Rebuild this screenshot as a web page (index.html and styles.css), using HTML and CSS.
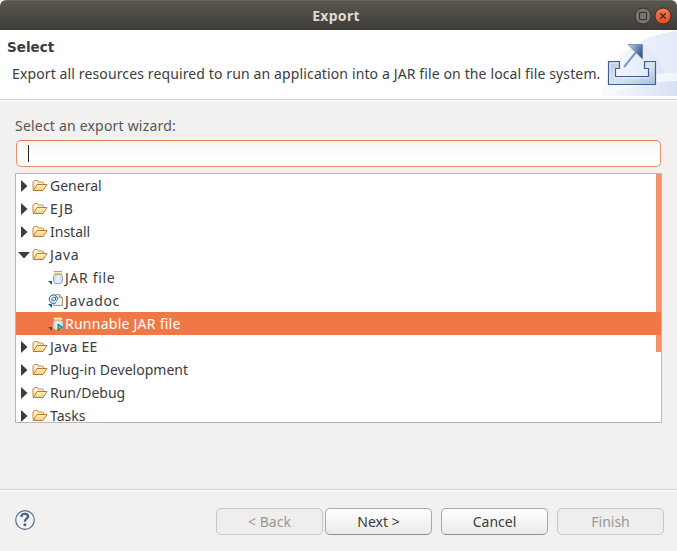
FILE: index.html
```html
<!DOCTYPE html>
<html lang="en">
<head>
<meta charset="utf-8">
<title>Export</title>
<link rel="stylesheet" href="styles.css">
</head>
<body>
<svg class="defs" width="0" height="0" aria-hidden="true">
  <defs>
    <linearGradient id="fold" x1="0" y1="0" x2="0" y2="1"><stop offset="0" stop-color="#fff4cf"/><stop offset="1" stop-color="#f5cf7c"/></linearGradient>
    <linearGradient id="glass" x1="0" y1="0" x2="1" y2="0"><stop offset="0" stop-color="#c3d3ec"/><stop offset=".5" stop-color="#edf4fc"/><stop offset="1" stop-color="#c5d4ee"/></linearGradient>
    <symbol id="folder" viewBox="0 0 16 13">
      <path d="M1 10.500v-7.500l1.500-1.500h3l1 1.500h4l1 1v1.500" fill="#fff0ca" stroke="#c28a43"/>
      <path d="M1.200 11.500 5 5.500h10L11 11.500z" fill="url(#fold)" stroke="#b87a32"/>
    </symbol>
    <symbol id="jar" viewBox="0 0 16 16">
      <path d="M0 11h4v4z" fill="#1e5c94"/>
      <path d="M6.500 4.500h7l1 2v5l-1.500 2H7l-1.500-2v-5z" fill="url(#glass)" stroke="#93a8cf"/>
      <path d="M6 1h8v3H6z" fill="#fff0b0"/>
      <path d="M6 1.500h8M6.500 4h7" stroke="#cfa63c"/>
    </symbol>
    <symbol id="run" viewBox="0 0 16 16">
      <path d="M0 11h4v4z" fill="#1e5c94"/>
      <path d="M6.500 4.500h7l1 2v5l-1.500 2H7l-1.500-2v-5z" fill="url(#glass)" stroke="#bccae2"/>
      <path d="M6 1h8v3H6z" fill="#fff0b0"/>
      <path d="M6 1.500h8M6.500 4h7" stroke="#d9ae42"/>
      <path d="M10 8v6.500l4.500-3.200z" fill="#5ec27e" stroke="#16723e"/>
    </symbol>
    <symbol id="doc" viewBox="0 0 16 16">
      <path d="M0 11h4v4z" fill="#1e5c94"/>
      <path d="M5.500 1.500h6l3 3v8h-9z" fill="#eef4fd" stroke="#9b9a78"/>
      <path d="M11.500 1.500v3h3" fill="#e7d29b" stroke="#b89b58"/>
      <circle cx="6" cy="6" r="4.800" fill="#e6f2fb"/>
      <path d="M8.300 9.500A4.300 4.300 0 1 1 9.800 5.700c0 2-2.500 2.500-2.300.5l.3-2.500M7.500 5.700c-.6-2.300-3.500-1.500-3.600.8-.1 2.300 3 2 3.500-.2" fill="none" stroke="#29649c"/>
    </symbol>
  </defs>
</svg>
<div class="window">
  <header class="titlebar">
    <span></span>
    <h1>Export</h1>
    <div class="controls">
      <svg width="18" height="18" viewBox="0 0 18 18"><circle cx="9" cy="9" r="8" fill="#77746c" stroke="#35332e"/><path d="M5.500 5.500h7v7h-7z" fill="none" stroke="#35332e"/></svg>
      <svg width="18" height="18" viewBox="0 0 18 18"><defs><linearGradient id="close" x1="0" y1="0" x2="0" y2="1"><stop offset="0" stop-color="#f47b55"/><stop offset="1" stop-color="#e64b1d"/></linearGradient></defs><circle cx="9" cy="9" r="8" fill="url(#close)" stroke="#35332e"/><path d="m6.300 6.300 5.400 5.400m0-5.400-5.400 5.400" stroke="#3c2e25" stroke-width="1.300"/></svg>
    </div>
  </header>
  <section class="banner">
    <div class="intro">
      <h2>Select</h2>
      <p>Export all resources required to run an application into a JAR file on the local file system.</p>
    </div>
    <svg class="art" width="75" height="66" viewBox="0 0 75 66">
      <defs>
        <linearGradient id="sweep" x1="0" y1="0" x2="1" y2="0"><stop offset="0" stop-color="#fafbff"/><stop offset="1" stop-color="#d6e0f5"/></linearGradient>
        <linearGradient id="tray" x1="0" y1="0" x2="1" y2="1"><stop offset="0" stop-color="#b9c9e1"/><stop offset=".55" stop-color="#d9e3f0"/><stop offset="1" stop-color="#a9bbd6"/></linearGradient>
        <linearGradient id="arrow" x1="0" y1="0" x2="1" y2=".6"><stop offset="0" stop-color="#c5d4e9"/><stop offset="1" stop-color="#34578e"/></linearGradient>
      </defs>
      <path d="M0 66C4 32 32 6 75 1v65z" fill="url(#sweep)"/>
      <path d="M38 11C51 20 60 31 63 45l12-2V1C61 3 48 6 38 11z" fill="#eef2fc" opacity=".6"/>
      <path d="M0 66C20 49 45 43 75 43v8C50 52 25 57 0 66z" fill="#f8faff" opacity=".8"/>
      <path d="M6.500 31.500h11v7h-4v8h33v-8h-4v-7h11v23h-47z" fill="url(#tray)" stroke="#3e5f95" stroke-width="1.200"/>
      <path d="M8 53V33h8M12 38v10h36" fill="none" stroke="#eef3fa" opacity=".8"/>
      <path d="M22 37 35 21" stroke="#7f99c0" stroke-width="2"/>
      <path d="M26 14.500h14.500V29z" fill="url(#arrow)" stroke="#6d89b5" stroke-width=".8"/>
    </svg>
  </section>
  <main class="content">
    <div class="label">Select an export wizard:</div>
    <div class="filter"><span class="caret"></span></div>
    <div class="tree">
      <ul>
        <li><svg class="tw" viewBox="0 0 12 12"><path d="M3 0v12l6.500-6z"/></svg><svg class="folder"><use href="#folder"/></svg><span>General</span></li>
        <li><svg class="tw" viewBox="0 0 12 12"><path d="M3 0v12l6.500-6z"/></svg><svg class="folder"><use href="#folder"/></svg><span class="loose">EJB</span></li>
        <li><svg class="tw" viewBox="0 0 12 12"><path d="M3 0v12l6.500-6z"/></svg><svg class="folder"><use href="#folder"/></svg><span>Install</span></li>
        <li><svg class="tw" viewBox="0 0 12 12"><path d="M0 3h12L6 9.500z"/></svg><svg class="folder"><use href="#folder"/></svg><span class="loose">Java</span></li>
        <li class="child"><svg class="leaf"><use href="#jar"/></svg><span class="loose">JAR file</span></li>
        <li class="child"><svg class="leaf"><use href="#doc"/></svg><span class="loose">Javadoc</span></li>
        <li class="child selected"><svg class="leaf"><use href="#run"/></svg><span class="relaxed">Runnable JAR file</span></li>
        <li><svg class="tw" viewBox="0 0 12 12"><path d="M3 0v12l6.500-6z"/></svg><svg class="folder"><use href="#folder"/></svg><span class="relaxed">Java EE</span></li>
        <li><svg class="tw" viewBox="0 0 12 12"><path d="M3 0v12l6.500-6z"/></svg><svg class="folder"><use href="#folder"/></svg><span>Plug-in Development</span></li>
        <li><svg class="tw" viewBox="0 0 12 12"><path d="M3 0v12l6.500-6z"/></svg><svg class="folder"><use href="#folder"/></svg><span>Run/Debug</span></li>
        <li><svg class="tw" viewBox="0 0 12 12"><path d="M3 0v12l6.500-6z"/></svg><svg class="folder"><use href="#folder"/></svg><span>Tasks</span></li>
      </ul>
      <div class="thumb"></div>
    </div>
  </main>
  <footer class="actions">
    <svg class="help" width="20" height="20" viewBox="0 0 20 20"><circle cx="10" cy="10" r="9.300" fill="#f2f3f5" stroke="#586b8e" stroke-width="1.200"/><path d="M6.500 7V5.500c1.500-2.700 7-2 6.500 1.200-.3 2-3.200 2.200-3.200 5" fill="none" stroke="#4c608a" stroke-width="2.300"/><circle cx="9.900" cy="14.800" r="1.500" fill="#4c608a"/></svg>
    <div class="buttons">
      <button disabled>&lt; Back</button>
      <button class="next">Next &gt;</button>
      <button>Cancel</button>
      <button disabled>Finish</button>
    </div>
  </footer>
</div>
</body>
</html>
```
FILE: styles.css
```css
* { box-sizing: border-box; }
body {
  margin: 0;
  background: #fff;
  color: #3c3c3c;
  font: 14px/23px "Noto Sans", sans-serif;
}
h1, h2, p, ul { margin: 0; padding: 0; }
svg { display: block; flex: none; }
span { white-space: nowrap; }
.defs { position: absolute; }
.window {
  display: flex;
  flex-direction: column;
  width: 677px;
  height: 551px;
  overflow: hidden;
  background: #f2f1ef;
  border-radius: 6px 6px 0 0;
}
.titlebar {
  display: grid;
  grid-template-columns: 1fr auto 1fr;
  align-items: center;
  height: 30px;
  padding: 0 5px 0 0;
  background: linear-gradient(#5a5750, #3d3b36);
  border-top: 1px solid #6a675f;
}
h1 { color: #dfdbd2; font-size: 14px; line-height: 27px; letter-spacing: 0.3px; }
.controls { display: flex; justify-content: flex-end; gap: 2px; }
.banner {
  display: flex;
  justify-content: space-between;
  height: 70px;
  background: #fff;
  border-bottom: 1px solid #d8d6d3;
}
.intro { padding: 6px 0 0 7px; width: 602px; }
h2 { font: bold 13.5px/22px "DejaVu Sans", sans-serif; }
.intro p { padding: 5px 0 0 5px; line-height: 22px; letter-spacing: 0.125px; white-space: nowrap; }
.content {
  flex: 1;
  padding: 15px 15px 0;
  border-top: 2px solid #f8f7f6;
}
.label { height: 23px; line-height: 18px; color: #555; letter-spacing: 0.2px; }
.filter {
  height: 27px;
  margin: 0 1px;
  padding: 4px 11px;
  background: linear-gradient(#f5f5f5, #fff 65%);
  border: 1px solid #e98c69;
  border-top-color: #e17b55;
  border-radius: 5px;
}
.caret { display: block; width: 1px; height: 17px; background: #222; }
.tree {
  display: flex;
  position: relative;
  width: 647px;
  height: 250px;
  margin-top: 6px;
  background: #fff;
  border: 1px solid #bab8b5;
  overflow: hidden;
}
ul { flex: 1; list-style: none; }
li { display: flex; align-items: center; height: 23px; padding-left: 2px; }
li span { line-height: 23px; }
.loose { letter-spacing: 0.65px; }
.relaxed { letter-spacing: 0.25px; }
.tw { width: 12px; height: 12px; margin-right: 2px; fill: #3c3c3c; }
.folder { width: 16px; height: 13px; margin-right: 2px; }
.child { padding-left: 32px; }
.leaf { width: 16px; height: 16px; margin-right: 1px; }
.selected { background: #f07746; color: #fff; }
.thumb {
  position: absolute;
  top: 0;
  right: 0;
  width: 5px;
  height: 178px;
  background: #f07746;
  opacity: 0.8;
}
.actions {
  display: flex;
  justify-content: space-between;
  height: 62px;
  padding: 18px 13px 0 15px;
  border-top: 1px solid #d9d8d5;
  box-shadow: inset 0 2px #f8f7f6;
}
.help { margin-top: 2px; }
.buttons { display: flex; gap: 9px; }
button {
  width: 107px;
  height: 27px;
  padding: 0;
  color: #3c3c3c;
  font: 14px/24px "Noto Sans", sans-serif;
  background: linear-gradient(#fff, #ebeae9);
  border: 1px solid #aaa9a7;
  border-bottom-color: #908f8d;
  border-radius: 5px;
}
.next { margin-left: -7px; }
button:disabled { color: #999895; background: #efeeec; border-color: #c8c7c5; }
```
